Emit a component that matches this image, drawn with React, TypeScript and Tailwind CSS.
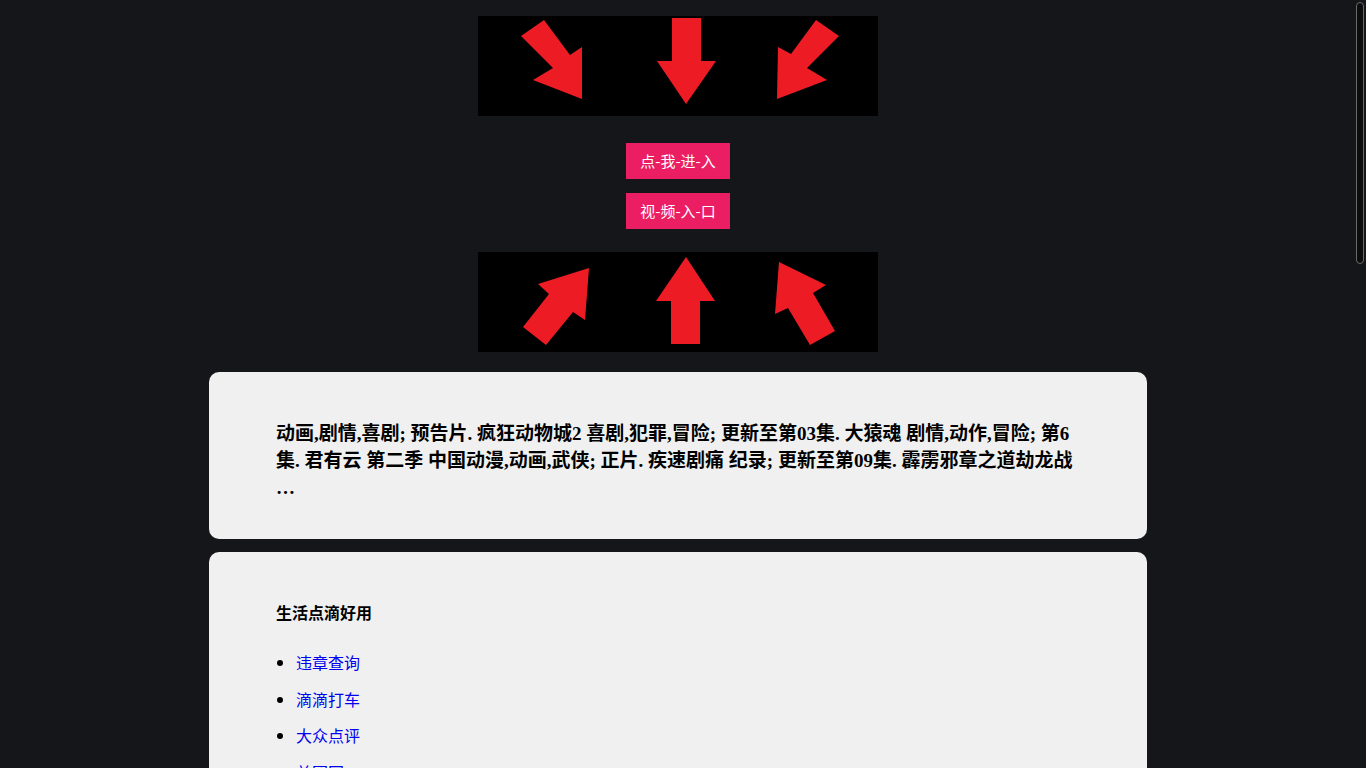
const arrowRed = "#ed1c24"

function TopArrows() {
    return (
        <svg width="400" height="100" viewBox="0 0 400 100" className="block bg-black">
            <polygon fill={arrowRed} points="43,20 66,4 92,39 104,31 104,83 55,64 75,52" />
            <polygon fill={arrowRed} points="194,2 223,2 223,45 238,45 208,88 179,45 194,45" />
            <polygon fill={arrowRed} points="361,20 338,4 313,38 300,31 299,83 349,64 329,52" />
        </svg>
    )
}

function BottomArrows() {
    return (
        <svg width="400" height="100" viewBox="0 0 400 100" className="block bg-black">
            <polygon fill={arrowRed} points="45,75 68,93 95,60 107,68 111,16 60,32 71,42" />
            <polygon fill={arrowRed} points="208,5 237,49 222,49 222,92 193,92 193,49 178,49" />
            <polygon fill={arrowRed} points="301,10 348,33 335,41 357,79 332,93 310,56 297,62" />
        </svg>
    )
}

const links = ["违章查询", "滴滴打车", "大众点评", "美团网", "携程旅行", "百度地图", "12306"]

export default function App() {
    return (
        <div className="relative min-h-screen bg-[#15161a] pr-[10px] font-['Noto_Sans_CJK_SC',sans-serif]">
            {/* page scrollbar as seen in the screenshot */}
            <div className="fixed right-[2px] top-[2px] w-[8px] h-[262px] rounded-[4px] bg-[#0c0c0c] border border-[#6a6a6a]" />

            <div className="pt-[16px] pb-[40px]">
                <div className="flex flex-col items-center">
                    <TopArrows />
                    <a href="#" className="mt-[27px] block w-[104px] h-[36px] bg-[#ec1e63] text-white text-[15px] leading-[36px] text-center">
                        点-我-进-入
                    </a>
                    <a href="#" className="mt-[14px] block w-[104px] h-[36px] bg-[#ec1e63] text-white text-[15px] leading-[36px] text-center">
                        视-频-入-口
                    </a>
                    <div className="mt-[23px]">
                        <BottomArrows />
                    </div>
                </div>

                <div className="mx-auto mt-[20px] w-[938px] rounded-[10px] bg-[#f0f0f0] px-[67px] pt-[48px] pb-[38px]">
                    <p className="font-['Liberation_Serif','Noto_Sans_CJK_SC',serif] font-bold text-[19px] leading-[27px] text-black">
                        动画,剧情,喜剧; 预告片. 疯狂动物城2 喜剧,犯罪,冒险; 更新至第03集. 大猿魂 剧情,动作,冒险; 第6集. 君有云 第二季 中国动漫,动画,武侠; 正片. 疾速剧痛 纪录; 更新至第09集. 霹雳邪章之道劫龙战 …
                    </p>
                </div>

                <div className="mx-auto mt-[13px] w-[938px] rounded-[10px] bg-[#f0f0f0] px-[67px] pt-[48px] pb-[40px]">
                    <h3 className="text-[16px] leading-[24px] font-bold text-black">生活点滴好用</h3>
                    <ul className="mt-[26px] list-disc pl-[20px] text-[16px] leading-[24px] text-black">
                        {links.map((name) => (
                            <li key={name} className="mb-[12.5px]">
                                <a href="#" className="text-[#0000ee]">{name}</a>
                            </li>
                        ))}
                    </ul>
                </div>
            </div>
        </div>
    )
}
